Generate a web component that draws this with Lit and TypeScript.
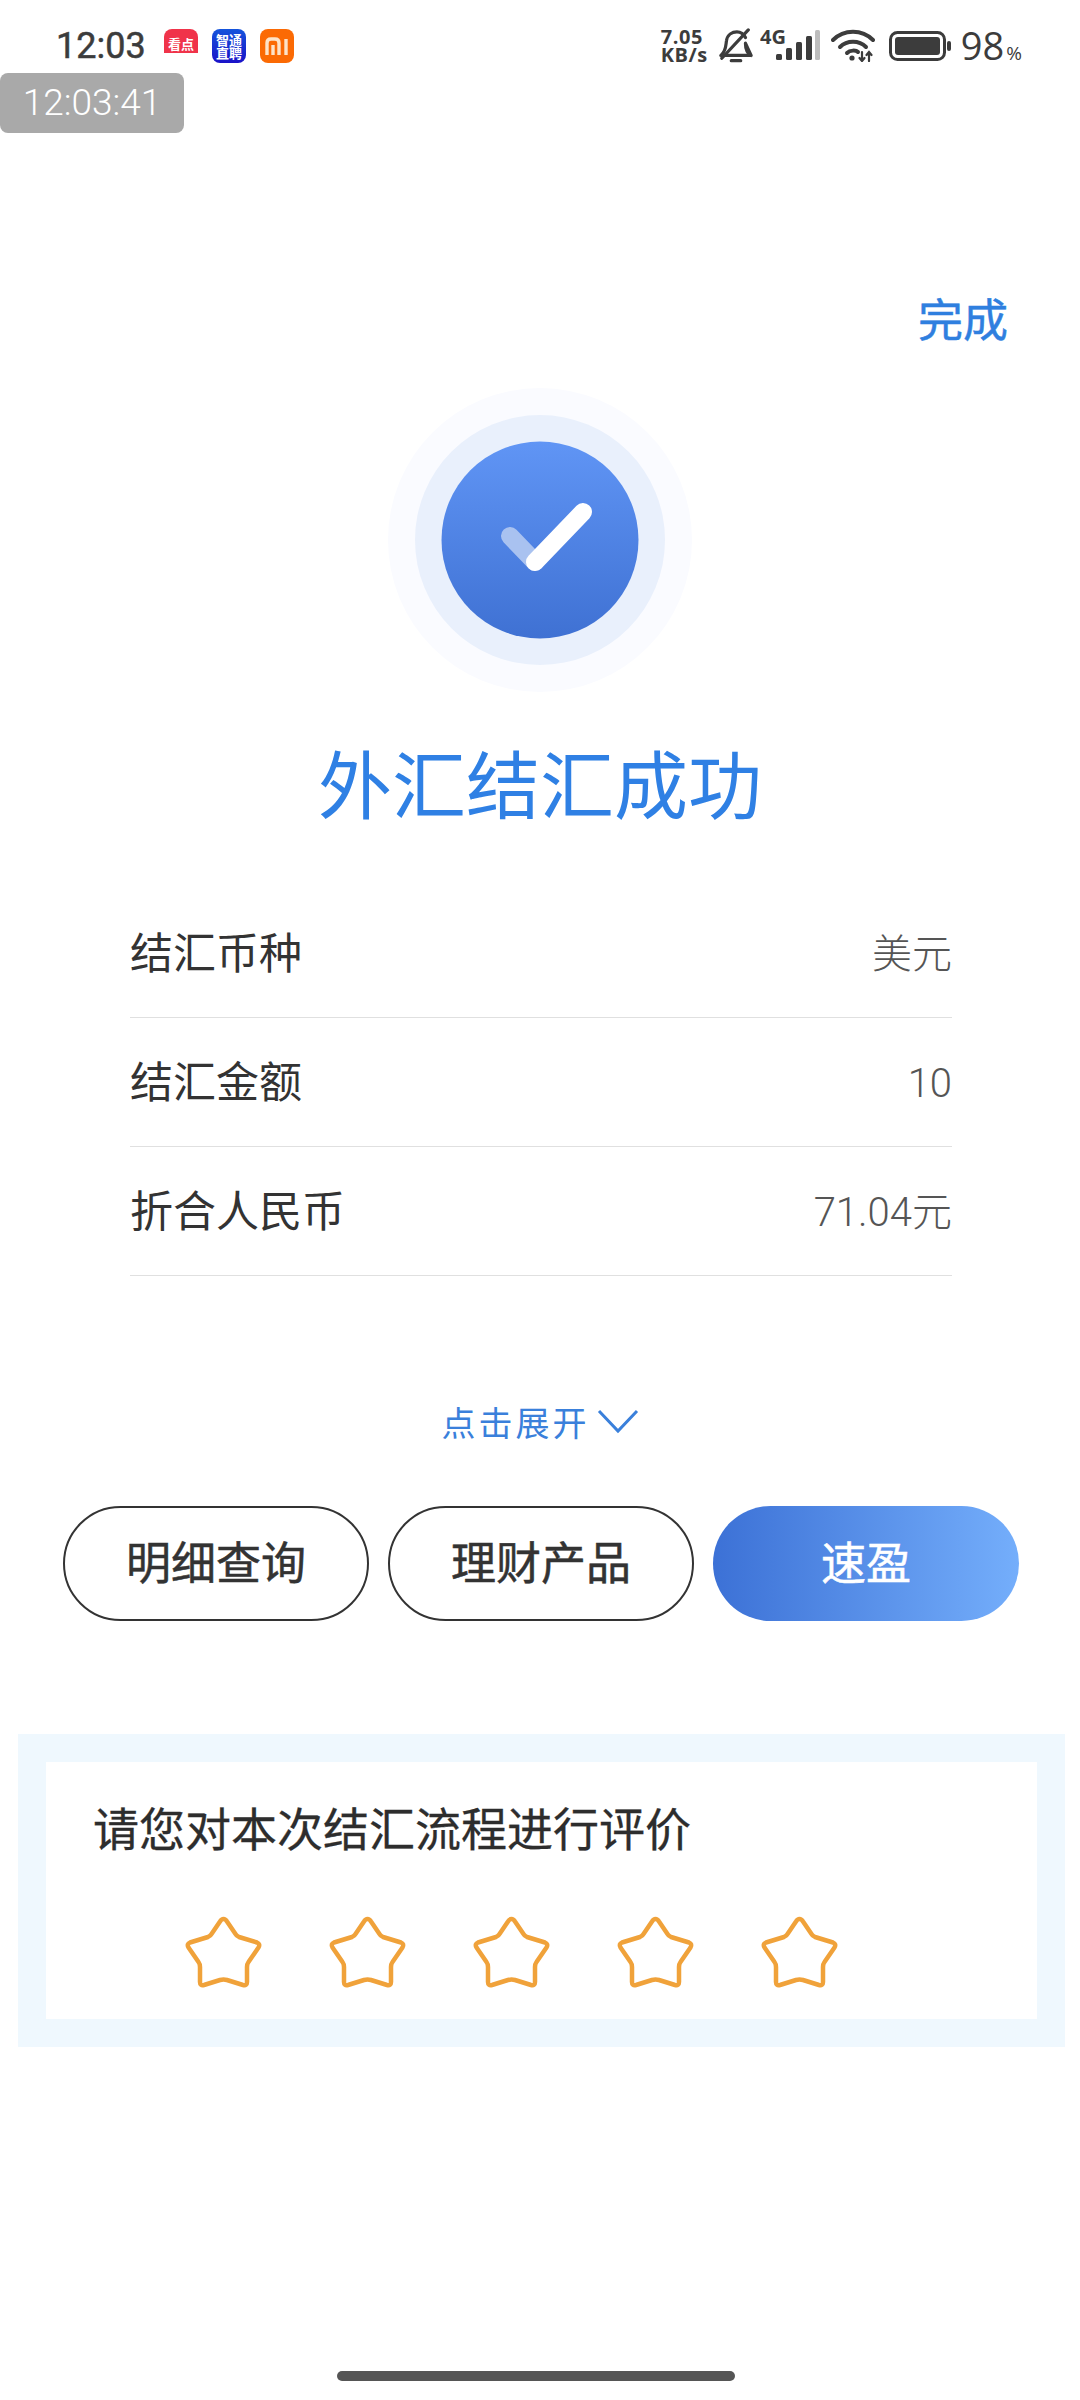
import { LitElement, html, css } from "lit";
import { customElement } from "lit/decorators.js";

const STAR = "M38.5 3 Q40.5 3 42 5.5 L50.5 18 Q51.5 20 54 21 L72 26.5 Q75.5 28 73.5 31.5 L63.5 46 Q62 48 62 51 L62 66 Q62 70 58 69 L42 64 Q38.5 63 35 64 L19 69 Q15 70 15 66 L15 51 Q15 48 13.5 46 L3.5 31.5 Q1.5 28 5 26.5 L23 21 Q25.5 20 26.5 18 L35 5.5 Q36.5 3 38.5 3 Z";

const ROWS = [
  ["结汇币种", "美元"],
  ["结汇金额", "10"],
  ["折合人民币", "71.04元"],
];

@customElement("app-root")
export class AppRoot extends LitElement {
  static styles = css`
    :host {
      display: block;
      width: 1080px;
      height: 2400px;
      position: relative;
      overflow: hidden;
      background: #fff;
      font-family: "Noto Sans CJK SC", "Noto Sans", sans-serif;
      color: #333;
    }
    .status {
      height: 100px;
      box-sizing: border-box;
      padding: 28px 58px 0 56px;
      display: flex;
      align-items: flex-start;
    }
    .time {
      font: 400 36px/36px Roboto, sans-serif;
      -webkit-text-stroke: 0.5px #3c3c3c;
      color: #3c3c3c;
      width: 108px;
    }
    .apps { display: flex; gap: 14px; margin-top: 1px; }
    .app {
      width: 34px;
      height: 34px;
      border-radius: 8px;
      color: #fff;
      display: flex;
      flex-direction: column;
      align-items: center;
      justify-content: center;
      overflow: hidden;
    }
    .app span {
      display: block;
      font-size: 13px;
      line-height: 13px;
      font-weight: 700;
      white-space: nowrap;
    }
    .red {
      background: linear-gradient(#f0334a 72%, #fff 72%);
      justify-content: flex-start;
      padding-top: 8px;
      box-sizing: border-box;
    }
    .blue { background: linear-gradient(#1554dc, #1a12c8); }
    .orange { background: #fb6a04; }
    .sys {
      margin-left: auto;
      display: flex;
      align-items: flex-start;
      color: #3c3c3c;
    }
    .speed {
      font: 700 20px/18px "Open Sans", sans-serif;
      letter-spacing: 0.5px;
      width: 55px;
      margin-right: 3px;
    }
    .speed div { white-space: nowrap; }
    .sys svg { display: block; flex: none; }
    .gap-bell { margin-right: 7px; }
    .signal { margin: -8px 11px 0 0; }
    .wifi { margin-right: 14px; }
    .batt { margin-top: 3px; }
    .pct {
      font: 400 38px/34px "Open Sans", sans-serif;
      color: #3c3c3c;
      margin-left: 10px;
      white-space: nowrap;
    }
    .pct small { font-size: 19px; margin-left: 2px; }
    .clock {
      position: absolute;
      left: 0;
      top: 73px;
      width: 184px;
      height: 60px;
      border-radius: 8px;
      background: #a9a9a9;
      color: #fff;
      font: 300 37px/60px Roboto, sans-serif;
      text-align: center;
    }
    .done-row {
      height: 90px;
      margin-top: 175px;
      padding: 0 72px 6px 0;
      box-sizing: border-box;
      display: flex;
      justify-content: flex-end;
      align-items: center;
      font-size: 45px;
      -webkit-text-stroke: 0.5px #2f7fdf;
      color: #2f7fdf;
    }
    .check {
      display: block;
      margin: 23px auto 0;
    }
    .title {
      margin-top: 43px;
      height: 100px;
      line-height: 92px;
      text-align: center;
      font-size: 74px;
      color: #2f80e4;
    }
    .rows { margin: 54px 128px 0 130px; }
    .row {
      height: 129px;
      box-sizing: border-box;
      border-bottom: 1px solid #e0e0e0;
      padding-bottom: 6px;
      display: flex;
      justify-content: space-between;
      align-items: center;
    }
    .key { font-size: 43px; color: #333; }
    .val {
      font-family: Roboto, "Noto Sans CJK SC", sans-serif;
      font-weight: 300;
      font-size: 40px;
      line-height: 50px;
      margin-top: 9px;
      color: #555;
    }
    .expand {
      margin-top: 120px;
      height: 50px;
      display: flex;
      justify-content: center;
      align-items: center;
      gap: 7px;
      font-size: 34px;
      letter-spacing: 3px;
      color: #3a80db;
    }
    .actions {
      margin: 60px 61px 0 63px;
      display: grid;
      grid-template-columns: repeat(3, 1fr);
      gap: 19px;
    }
    .btn {
      height: 115px;
      border-radius: 58px;
      box-sizing: border-box;
      border: 2px solid #333;
      padding-bottom: 6px;
      display: flex;
      align-items: center;
      justify-content: center;
      font-size: 45px;
      -webkit-text-stroke: 0.5px currentColor;
      color: #333;
    }
    .primary {
      border: 0;
      color: #fff;
      background: linear-gradient(90deg, #3c71d6, #74aefb);
    }
    .feedback {
      margin: 113px 15px 0 18px;
      padding: 28px;
      background: #eff8fe;
    }
    .panel {
      height: 257px;
      box-sizing: border-box;
      background: #fff;
      padding: 34px 0 0 47px;
    }
    .ask { font-size: 46px; line-height: 60px; color: #2d2d2d; -webkit-text-stroke: 0.3px #2d2d2d; }
    .stars {
      display: flex;
      gap: 67px;
      margin: 60px 0 0 92px;
    }
    .stars svg { display: block; }
    .home {
      width: 398px;
      height: 10px;
      border-radius: 5px;
      background: #555;
      margin: 324px 0 0 337px;
    }
  `;

  render() {
    return html`
      <div class="status">
        <div class="time">12:03</div>
        <div class="apps">
          <div class="app red"><span>看点</span></div>
          <div class="app blue"><span>智通</span><span>直聘</span></div>
          <div class="app orange">
            <svg width="24" height="18" viewBox="0 0 24 18" fill="none" stroke="#fde3c8" stroke-width="3.4">
              <path d="M2 18V6 Q2 2 6 2H10 Q14 2 14 6V18M8 8V18M21 2V18" />
            </svg>
          </div>
        </div>
        <div class="sys">
          <div class="speed"><div>7.05</div><div>KB/s</div></div>
          <svg class="gap-bell" width="34" height="36" viewBox="0 0 36 36" fill="none" stroke="#3c3c3c" stroke-width="3.4" stroke-linecap="round" stroke-linejoin="round">
            <path d="M2 28 C8 23 7 17 8 12 C9 6 14 3 19 3 C23 3 26 5 28 9 M28 15 C28 20 29 25 34 28 Z M2 28 H34" />
            <path d="M3 31 L31 1" />
            <path d="M13 33.5 H23" />
          </svg>
          <svg class="signal" width="60" height="44" viewBox="0 0 60 44">
            <text x="0" y="24" font-family="Open Sans" font-weight="700" font-size="20" fill="#3c3c3c">4G</text>
            <rect x="16" y="34" width="6" height="6" rx="1.5" fill="#3c3c3c" />
            <rect x="26" y="28" width="6" height="12" rx="1.5" fill="#3c3c3c" />
            <rect x="36" y="22" width="6" height="18" rx="1.5" fill="#3c3c3c" />
            <rect x="46" y="16" width="6" height="24" rx="1.5" fill="#3c3c3c" />
            <rect x="55" y="10" width="5" height="30" rx="1.5" fill="#bdbdbd" />
          </svg>
          <svg class="wifi" width="44" height="34" viewBox="0 0 44 34" fill="none" stroke="#3c3c3c" stroke-width="4" stroke-linecap="round">
            <path d="M2 12 C13 1 31 1 42 12" />
            <path d="M9 19 C16 12 28 12 35 19" />
            <path d="M16 25 C19 22 25 22 27 24" />
            <circle cx="21" cy="30" r="2.6" fill="#3c3c3c" stroke="none" />
            <path d="M31 24V33M38 24V33M28.5 30L31 33L33.5 30M35.5 27L38 24L40.5 27" stroke-width="2.2" />
          </svg>
          <svg class="batt" width="62" height="30" viewBox="0 0 62 30">
            <rect x="1.5" y="1.5" width="54" height="27" rx="7" fill="none" stroke="#3c3c3c" stroke-width="3" />
            <rect x="6" y="6" width="45" height="18" rx="3" fill="#3c3c3c" />
            <rect x="58" y="10" width="4" height="10" rx="2" fill="#3c3c3c" />
          </svg>
          <div class="pct">98<small>%</small></div>
        </div>
      </div>
      <div class="clock">12:03:41</div>

      <div class="done-row">完成</div>

      <svg class="check" width="304" height="304" viewBox="0 0 304 304">
        <defs>
          <linearGradient id="g" x1="0" y1="0" x2="0" y2="1">
            <stop offset="0" stop-color="#6095f5" />
            <stop offset="1" stop-color="#3f71d3" />
          </linearGradient>
        </defs>
        <circle cx="152" cy="152" r="152" fill="#fafbff" />
        <circle cx="152" cy="152" r="125" fill="#e9f0fc" />
        <circle cx="152" cy="152" r="98.5" fill="url(#g)" />
        <path d="M122 148 L147 174" stroke="#a9c2f0" stroke-width="18" stroke-linecap="round" />
        <path d="M147 174 L195 124" stroke="#fff" stroke-width="18" stroke-linecap="round" />
      </svg>

      <div class="title">外汇结汇成功</div>

      <div class="rows">
        ${ROWS.map(
          ([k, v]) => html`<div class="row"><span class="key">${k}</span><span class="val">${v}</span></div>`
        )}
      </div>

      <div class="expand">
        <span>点击展开</span>
        <svg width="42" height="26" viewBox="0 0 42 26" fill="none" stroke="#3a80db" stroke-width="3">
          <path d="M2 3 L21 23 L40 3" />
        </svg>
      </div>

      <div class="actions">
        <div class="btn">明细查询</div>
        <div class="btn">理财产品</div>
        <div class="btn primary">速盈</div>
      </div>

      <div class="feedback">
        <div class="panel">
          <div class="ask">请您对本次结汇流程进行评价</div>
          <div class="stars">
            ${[0, 1, 2, 3, 4].map(
              () => html`<svg width="77" height="72" viewBox="0 0 77 72" fill="none" stroke="#f0a23a" stroke-width="4.5" stroke-linejoin="round"><path d="${STAR}" /></svg>`
            )}
          </div>
        </div>
      </div>

      <div class="home"></div>
    `;
  }
}
